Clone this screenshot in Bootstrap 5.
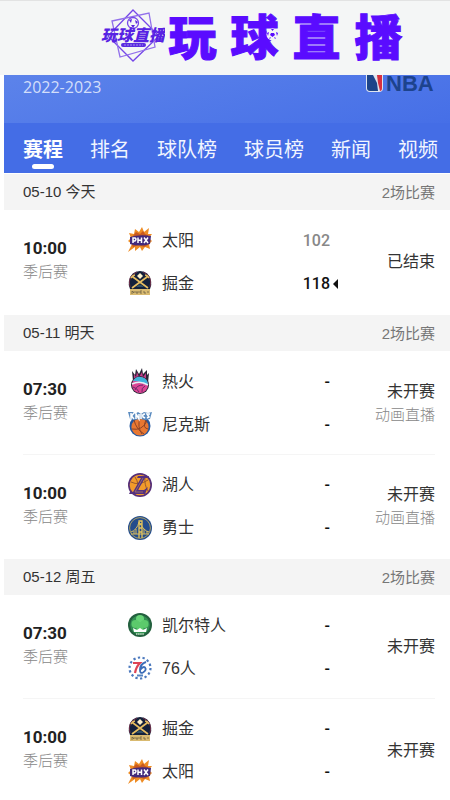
<!DOCTYPE html>
<html lang="zh-CN">
<head>
<meta charset="utf-8">
<meta name="viewport" content="width=device-width, initial-scale=1">
<title>玩球直播</title>
<link href="https://cdn.jsdelivr.net/npm/bootstrap@5.3.0/dist/css/bootstrap.min.css" rel="stylesheet">
<style>
  body { font-family: "Liberation Sans", "Noto Sans CJK SC", sans-serif; color: #333; background: #fff; font-size: 16px; line-height: 23px; }
  .site-head { background: #f4f6f6; border-top: 1px solid #e2e3e3; height: 75px; padding-left: 54px; gap: 3px; }
  .site-logo { width: 64px; height: 54px; }
  .site-title { font-family: "Noto Sans CJK SC", sans-serif; font-weight: 900; font-size: 48px; line-height: 66px; gap: 14px; color: #5a0cff; -webkit-text-stroke: 1px #5a0cff; }
  .title-ball { position: absolute; right: 0; top: 27px; width: 13px; height: 13px; }
  .page-main { margin-left: 4px; }
  .season-band { background: linear-gradient(165deg, #5c83ea, #466fe7); height: 48px; padding: 0 16px 0 19px; }
  .season-text { font-family: "Open Sans", sans-serif; font-size: 16px; line-height: 24px; color: #d3defa; }
  .tab-bar { background: #446de6; height: 50px; padding: 0 12px 0 19px; }
  .tab-link { color: #f1f5ff; font-size: 20px; line-height: 54px; white-space: nowrap; position: relative; }
  .tab-link.active { font-weight: 700; color: #fff; }
  .tab-link.active::after { content: ""; position: absolute; left: 50%; top: 41px; width: 22px; height: 5px; margin-left: -11px; border-radius: 3px; background: #fff; }
  .day-head { background: #f4f4f4; border-top: 1px solid #fff; padding: 0 15px 0 19px; height: 37px; font-size: 15px; }
  .day-name { font-size: 15px; line-height: 36px; }
  .day-count { color: #777; }
  .game-list { padding: 0 15px 1px 19px; }
  .game-item { display: grid; grid-template-columns: 105px 1fr 105px; height: 103px; align-items: center; }
  .game-item + .game-item { border-top: 1px solid #f5f5f5; }
  .time-cell { padding-bottom: 3px; }
  .game-time { font-family: Roboto, sans-serif; font-weight: 700; font-size: 17px; color: #222; }
  .game-sub { color: #888; font-size: 15px; font-weight: 300; }
  .team-row { height: 43px; gap: 10px; }
  .team-icon { width: 24px; height: 26px; }
  .team-score { font-family: Roboto, sans-serif; font-weight: 500; color: #111; position: relative; }
  .team-score.lost { color: #888; }
  .team-score.won::after { content: ""; position: absolute; left: 100%; top: 7px; margin-left: 3px; border: 5px solid transparent; border-left: 0; border-right-color: #111; }
</style>
<script src="https://cdn.jsdelivr.net/npm/bootstrap@5.3.0/dist/js/bootstrap.bundle.min.js"></script>
</head>
<body>
<svg class="d-none" aria-hidden="true">
  <symbol id="suns" viewBox="0 0 24 26">
    <path d="M0 25 4 17 0 14 3 11 1 6 6 7 7 2 11 5 14 0 16 5 21 1 20 7 24 7 21 11 24 14 21 17 22 22 17 20 14 24 12 20 7 24 7 20Z" fill="#ee8c24"/>
    <path d="M5 9 8 5 12 7 15 4 17 7 20 8V18L16 20 11 18 5 20 3 16Z" fill="#c85a20"/>
    <path d="M2 10Q12 7 23 9L22 17Q12 20 2 17Z" fill="#432a7c"/>
    <path d="M5 16V11H7Q9 12 7 14H5M10 10.500V16M13.500 10.500V16M10 13.300H13.500M16 10.500 20 16M20 10.500 16 16" fill="none" stroke="#fff" stroke-width="1.500"/>
  </symbol>
  <symbol id="nuggets" viewBox="0 0 24 26">
    <path d="M2 19Q0 15 1 11Q3 1 12 1T23 11Q24 15 22 19V25H2Z" fill="#14213b"/>
    <path d="M2 17Q-1 6 9 2M22 17Q25 6 15 2" fill="none" stroke="#70304a" stroke-width="1"/>
    <path d="M3 8Q5 5 7 5M21 8Q19 5 17 5M5 7 20 18M19 7 4 18" fill="none" stroke="#e5bd61" stroke-width="1.700"/>
    <path d="M12 3 15 6 12 9 9 6Z" fill="#fff3ca"/>
    <path d="M8 17Q12 12 16 17Z" fill="#315066"/>
    <path d="M2 19H22V25H2Z" fill="#d9ba70"/>
    <path d="M4 24V21L6 23V21M8 21V23H10V21M14 21H12V23H14M16 21V23H18M20 21V23" fill="none" stroke="#6c6142" stroke-width=".800"/>
  </symbol>
  <symbol id="heat" viewBox="0 0 24 26">
    <path d="M5 13 4 3 7 7 8 1 11 6 14 0 15 6 19 2 19 7 21 5 20 15Z" fill="#292536"/>
    <path d="M6 11V6L8 9 9 4 11 9 14 4 15 9 18 5V13Z" fill="#c43d8b"/>
    <circle cx="12" cy="17" r="9" fill="#252634"/><circle cx="12" cy="17" r="8" fill="#dc4595"/>
    <path d="M5 13A8 8 0 0 1 20 17L16 16Q13 13 5 13Z" fill="#3eb5dc"/>
    <path d="M4 16Q12 12 20 17" stroke="#e9edf5" stroke-width="1.600" fill="none"/>
    <path d="M7 22Q9 17 15 17M14 24Q13 20 17 18M5 19Q9 20 11 24" stroke="#6d2969" fill="none"/>
  </symbol>
  <symbol id="knicks" viewBox="0 0 24 26">
    <circle cx="12" cy="15" r="10.500" fill="#24579e"/><circle cx="12" cy="16" r="8.600" fill="#e87731"/>
    <path d="M4 18Q14 20 19 10M6 9Q8 18 16 23M12 7Q9 16 14 23M18 9Q14 17 20 18" fill="none" stroke="#8b4328"/>
    <path d="M0 1H5L7 3 10 1 13 3 16 1 20 2 24 1 22 8 18 9 12 8 6 9 2 8Z" fill="#5c8cc0"/>
    <path d="M3 2V8M6 2 3.500 5 6 8M8 8V3L11 8V3M13 3V8M17 3Q14 3 15 6L17 7M22 3H19L21 6 19 7" fill="none" stroke="#fff" stroke-width="1.500"/>
  </symbol>
  <symbol id="lakers" viewBox="0 0 24 26">
    <circle cx="12" cy="13" r="12" fill="#573079"/><circle cx="12" cy="13" r="10.300" fill="#f29b2b"/>
    <path d="M3 10Q11 14 20 8M7 5Q12 12 9 22M17 4Q16 13 20 19" fill="none" stroke="#9a5a2c" stroke-width="1"/>
    <path d="M10 4H21L20 6H17L10 18H16L20 15 17 22H1L2 20H5L13 6H9Z" fill="#55317f"/>
    <path d="M15 6 7 20H15" fill="none" stroke="#a67a6a" stroke-width=".800"/>
  </symbol>
  <symbol id="warriors" viewBox="0 0 24 26">
    <circle cx="12" cy="13" r="12" fill="#244d8c"/><circle cx="12" cy="13" r="10.400" fill="none" stroke="#a89d65" stroke-width="1"/>
    <path d="M3 17Q9 15 11 7Q16 16 21 17M3 19H21M6 16V19M8 14V19M16 14V19M19 16V19" fill="none" stroke="#d9bd61" stroke-width="1"/>
    <path d="M11 23V6H14V23M11 9H14M11 13H14M11 17H14" fill="none" stroke="#e6c65a" stroke-width="1.300"/>
  </symbol>
  <symbol id="celtics" viewBox="0 0 24 26">
    <circle cx="12" cy="13" r="12" fill="#23603e"/><circle cx="12" cy="13" r="9.800" fill="#329052"/>
    <circle cx="12" cy="7" r="4" fill="#68d477"/><circle cx="7.500" cy="12" r="4" fill="#5cca6c"/><circle cx="16.500" cy="12" r="4" fill="#5cca6c"/><path d="M10 10H14L16 19H8Z" fill="#5cca6c"/>
    <path d="M5 16 9 18 12 16 15 18 19 16 18 20H6Z" fill="#fff"/><path d="M8 22H16" stroke="#c7dfc9" stroke-width="1.500" stroke-dasharray="1.500 .600"/>
  </symbol>
  <symbol id="sixers" viewBox="0 0 24 26">
    <circle cx="12" cy="13" r="10.500" fill="none" stroke="#4b78bd" stroke-width="2.200" stroke-dasharray="2.300 2.400"/>
    <path d="M5 8H12Q8 12 7 18" fill="none" stroke="#de4455" stroke-width="2.200"/>
    <path d="M18 7Q12 9 12 15Q12 19 15 17.500Q19 15 17 12.500Q15 11 12 15" fill="none" stroke="#3c6db8" stroke-width="1.900"/>
    <path d="M9 20.500H15" stroke="#5584c0" stroke-width="2"/>
  </symbol>
</svg>

<header class="site-head d-flex align-items-start justify-content-center">
  <svg class="site-logo mt-2 flex-shrink-0" viewBox="0 0 64 54" role="img" aria-label="玩球直播">
    <g fill="none" stroke="#7547e8" stroke-width="1.300">
      <path d="M32 1 58 27 32 52 7 27Z"/><path d="M11 12 48 4 54 38 19 48Z" stroke="#9270eb"/>
      <circle cx="32" cy="14" r="5.500" fill="#f4f6f6"/>
    </g>
    <path d="M28 11 31 10 30 14ZM34 11 37 13 35 15ZM30 16 34 16 32 19Z" fill="#5924dc"/>
    <text x="0" y="32" font-family="Noto Sans CJK SC, sans-serif" font-size="16" font-weight="900" font-style="italic" fill="#5722e3">玩球直播</text>
    <rect x="20" y="34" width="25" height="4" rx="2" fill="#5a2de0"/>
    <path d="M23 36H42" stroke="#a58ced" stroke-dasharray="2 1"/>
  </svg>
  <h1 class="site-title d-flex m-0"><span>玩</span><span class="position-relative">球<svg class="title-ball" viewBox="0 0 13 13" aria-hidden="true"><circle cx="6.500" cy="6.500" r="6" fill="#f4f6f6"/><path d="M5 5H8L9 7 6.500 9 4 7ZM5 1H8L6.500 3ZM1 5 3 4 2 8ZM12 5 10 4 11 8ZM3 11 5 10 4 9ZM10 11 8 10 9 9Z" fill="#5a0cff"/></svg></span><span>直</span><span>播</span></h1>
</header>

<main class="page-main">
  <div class="season-band d-flex justify-content-between align-items-start">
    <div class="season-text">2022-2023</div>
    <svg class="overflow-visible" width="68" height="17" viewBox="0 0 68 17" role="img" aria-label="NBA">
      <path d="M0 0H17V13Q17 17 13 17H4Q0 17 0 13Z" fill="#dfe5ef"/>
      <path d="M1 0H7L11 8 12 16H4Q1 16 1 13Z" fill="#1d4489"/><path d="M11 0H16V13Q16 16 14 16L12 8Z" fill="#d7303f"/>
      <text x="20" y="16" font-family="Liberation Sans, sans-serif" font-size="22" font-weight="700" fill="#1d438d">NBA</text>
    </svg>
  </div>
  <nav class="tab-bar d-flex justify-content-between">
    <a class="tab-link active text-decoration-none" href="#schedule" aria-current="page">赛程</a>
    <a class="tab-link text-decoration-none" href="#rank">排名</a>
    <a class="tab-link text-decoration-none" href="#teams">球队榜</a>
    <a class="tab-link text-decoration-none" href="#players">球员榜</a>
    <a class="tab-link text-decoration-none" href="#news">新闻</a>
    <a class="tab-link text-decoration-none" href="#videos">视频</a>
  </nav>

  <section id="schedule">
    <div class="day-head d-flex justify-content-between align-items-center"><h2 class="day-name m-0 fw-normal">05-10 今天</h2><span class="day-count">2场比赛</span></div>
    <ul class="game-list list-unstyled m-0">
      <li class="game-item">
        <div class="time-cell"><div class="game-time">10:00</div><div class="game-sub">季后赛</div></div>
        <div>
          <div class="team-row d-flex align-items-center"><svg class="team-icon"><use href="#suns"/></svg><span>太阳</span><span class="team-score lost ms-auto">102</span></div>
          <div class="team-row d-flex align-items-center"><svg class="team-icon"><use href="#nuggets"/></svg><span>掘金</span><span class="team-score won ms-auto">118</span></div>
        </div>
        <div class="text-end">已结束</div>
      </li>
    </ul>
  </section>

  <section>
    <div class="day-head d-flex justify-content-between align-items-center"><h2 class="day-name m-0 fw-normal">05-11 明天</h2><span class="day-count">2场比赛</span></div>
    <ul class="game-list list-unstyled m-0">
      <li class="game-item">
        <div class="time-cell"><div class="game-time">07:30</div><div class="game-sub">季后赛</div></div>
        <div>
          <div class="team-row d-flex align-items-center"><svg class="team-icon"><use href="#heat"/></svg><span>热火</span><span class="team-score ms-auto">-</span></div>
          <div class="team-row d-flex align-items-center"><svg class="team-icon"><use href="#knicks"/></svg><span>尼克斯</span><span class="team-score ms-auto">-</span></div>
        </div>
        <div class="text-end"><div>未开赛</div><div class="game-sub">动画直播</div></div>
      </li>
      <li class="game-item">
        <div class="time-cell"><div class="game-time">10:00</div><div class="game-sub">季后赛</div></div>
        <div>
          <div class="team-row d-flex align-items-center"><svg class="team-icon"><use href="#lakers"/></svg><span>湖人</span><span class="team-score ms-auto">-</span></div>
          <div class="team-row d-flex align-items-center"><svg class="team-icon"><use href="#warriors"/></svg><span>勇士</span><span class="team-score ms-auto">-</span></div>
        </div>
        <div class="text-end"><div>未开赛</div><div class="game-sub">动画直播</div></div>
      </li>
    </ul>
  </section>

  <section>
    <div class="day-head d-flex justify-content-between align-items-center"><h2 class="day-name m-0 fw-normal">05-12 周五</h2><span class="day-count">2场比赛</span></div>
    <ul class="game-list list-unstyled m-0">
      <li class="game-item">
        <div class="time-cell"><div class="game-time">07:30</div><div class="game-sub">季后赛</div></div>
        <div>
          <div class="team-row d-flex align-items-center"><svg class="team-icon"><use href="#celtics"/></svg><span>凯尔特人</span><span class="team-score ms-auto">-</span></div>
          <div class="team-row d-flex align-items-center"><svg class="team-icon"><use href="#sixers"/></svg><span>76人</span><span class="team-score ms-auto">-</span></div>
        </div>
        <div class="text-end">未开赛</div>
      </li>
      <li class="game-item">
        <div class="time-cell"><div class="game-time">10:00</div><div class="game-sub">季后赛</div></div>
        <div>
          <div class="team-row d-flex align-items-center"><svg class="team-icon"><use href="#nuggets"/></svg><span>掘金</span><span class="team-score ms-auto">-</span></div>
          <div class="team-row d-flex align-items-center"><svg class="team-icon"><use href="#suns"/></svg><span>太阳</span><span class="team-score ms-auto">-</span></div>
        </div>
        <div class="text-end">未开赛</div>
      </li>
    </ul>
  </section>
</main>
</body>
</html>
